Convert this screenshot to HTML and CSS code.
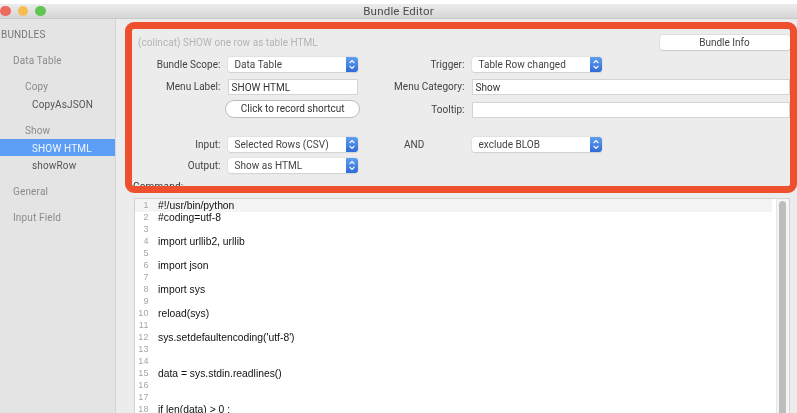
FILE: index.html
```html
<!DOCTYPE html>
<html lang="en">
<head>
<meta charset="utf-8">
<title>Bundle Editor</title>
<link rel="stylesheet" href="styles.css">
</head>
<body>
<div class="window">
  <header class="titlebar">
    <div class="lights"><span class="light red"></span><span class="light yellow"></span><span class="light green"></span></div>
    <div class="title">Bundle Editor</div>
  </header>
  <div class="content">
    <nav class="sidebar">
      <div class="side-head">BUNDLES</div>
      <div class="side-cat">Data Table</div>
      <div class="side-sub">Copy</div>
      <div class="side-item">CopyAsJSON</div>
      <div class="side-sub">Show</div>
      <div class="side-item selected">SHOW HTML</div>
      <div class="side-item">showRow</div>
      <div class="side-cat">General</div>
      <div class="side-cat">Input Field</div>
    </nav>
    <main class="main">
      <form class="form">
        <div class="hint">(colincat) SHOW one row as table HTML</div>
        <button type="button" class="info-btn">Bundle Info</button>

        <label class="lbl">Bundle Scope:</label>
        <div class="select"><span>Data Table</span><i class="stepper"><svg viewBox="0 0 12 15"><path d="M3.6 6 6 3.6 8.4 6M3.6 9 6 11.4 8.4 9"/></svg></i></div>
        <label class="lbl">Trigger:</label>
        <div class="select"><span>Table Row changed</span><i class="stepper"><svg viewBox="0 0 12 15"><path d="M3.6 6 6 3.6 8.4 6M3.6 9 6 11.4 8.4 9"/></svg></i></div>

        <label class="lbl">Menu Label:</label>
        <div class="input">SHOW HTML</div>
        <label class="lbl">Menu Category:</label>
        <div class="input">Show</div>

        <button type="button" class="shortcut">Click to record shortcut</button>
        <label class="lbl tip-lbl">Tooltip:</label>
        <div class="input tip"></div>

        <label class="lbl">Input:</label>
        <div class="select"><span>Selected Rows (CSV)</span><i class="stepper"><svg viewBox="0 0 12 15"><path d="M3.6 6 6 3.6 8.4 6M3.6 9 6 11.4 8.4 9"/></svg></i></div>
        <label class="lbl and">AND</label>
        <div class="select"><span>exclude BLOB</span><i class="stepper"><svg viewBox="0 0 12 15"><path d="M3.6 6 6 3.6 8.4 6M3.6 9 6 11.4 8.4 9"/></svg></i></div>

        <label class="lbl">Output:</label>
        <div class="select"><span>Show as HTML</span><i class="stepper"><svg viewBox="0 0 12 15"><path d="M3.6 6 6 3.6 8.4 6M3.6 9 6 11.4 8.4 9"/></svg></i></div>
      </form>
      <div class="cmd-label">Command:</div>
      <div class="editor-row">
        <div class="editor">
          <div class="line current"><span class="num">1</span><span class="code">#!/usr/bin/python</span></div>
          <div class="line"><span class="num">2</span><span class="code">#coding=utf-8</span></div>
          <div class="line"><span class="num">3</span><span class="code"></span></div>
          <div class="line"><span class="num">4</span><span class="code">import urllib2, urllib</span></div>
          <div class="line"><span class="num">5</span><span class="code"></span></div>
          <div class="line"><span class="num">6</span><span class="code">import json</span></div>
          <div class="line"><span class="num">7</span><span class="code"></span></div>
          <div class="line"><span class="num">8</span><span class="code">import sys</span></div>
          <div class="line"><span class="num">9</span><span class="code"></span></div>
          <div class="line"><span class="num">10</span><span class="code">reload(sys)</span></div>
          <div class="line"><span class="num">11</span><span class="code"></span></div>
          <div class="line"><span class="num">12</span><span class="code">sys.setdefaultencoding('utf-8')</span></div>
          <div class="line"><span class="num">13</span><span class="code"></span></div>
          <div class="line"><span class="num">14</span><span class="code"></span></div>
          <div class="line"><span class="num">15</span><span class="code">data = sys.stdin.readlines()</span></div>
          <div class="line"><span class="num">16</span><span class="code"></span></div>
          <div class="line"><span class="num">17</span><span class="code"></span></div>
          <div class="line"><span class="num">18</span><span class="code">if len(data) &gt; 0 :</span></div>
        </div>
        <div class="scrolltrack"><div class="thumb"></div></div>
      </div>
    </main>
  </div>
  <div class="annotation"></div>
</div>
</body>
</html>
```
FILE: styles.css
```css
* { box-sizing: border-box; }
html, body { margin: 0; height: 100%; }
body { background: #fff; overflow: hidden; font-family: "Roboto", "Liberation Sans", sans-serif; }
.window { position: relative; width: 797px; height: 413px; padding-top: 4px; display: flex; flex-direction: column; overflow: hidden; filter: blur(0.35px); }

.titlebar { position: relative; flex: 0 0 15px; background: linear-gradient(#ececec, #d6d6d6); border-bottom: 1px solid #c8c8c8; display: flex; align-items: center; }
.lights { display: flex; gap: 7px; }
.light { width: 10.5px; height: 10.5px; border-radius: 50%; }
.red { background: #ec6a5e; }
.yellow { background: #f4bf4f; }
.green { background: #61c554; }
.title { position: absolute; left: 0; right: 0; text-align: center; font-size: 11.5px; color: #4c4c4c; letter-spacing: .2px; }

.content { flex: 1; display: flex; min-height: 0; }

.sidebar { flex: 0 0 116px; background: #e4e4e4; border-right: 1px solid #d6d6d6; padding-top: 7px; font-size: 10px; color: #8b8b8b; letter-spacing: .15px; }
.side-head { height: 18px; line-height: 18px; padding-left: 1px; color: #777; }
.side-cat { height: 18px; line-height: 18px; margin-top: 8px; padding-left: 13px; }
.side-sub { height: 18px; line-height: 18px; margin-top: 8px; padding-left: 25px; }
.side-item { height: 18px; line-height: 18px; padding-left: 32px; color: #555; }
.side-item.selected { height: 17px; margin: -1px 0 1px; line-height: 19px; background: #5c9ef5; color: #f2f7ff; }

.main { flex: 1; min-width: 0; background: #ececec; padding-left: 18px; display: flex; flex-direction: column; }
.form { display: grid; grid-template-columns: 86.5px 130.5px 99.5px 318px; column-gap: 7px; grid-template-rows: 22px 22px 21px 37px 21px 23px; padding-top: 16px; font-size: 10px; letter-spacing: .03px; color: #444; }

.hint { grid-column: 1 / 4; padding-left: 4px; color: #b4b4b4; line-height: 15px; }
.info-btn { grid-column: 4; justify-self: end; width: 130px; height: 15px; padding: 0; border: 0; border-radius: 3px; background: #fff; box-shadow: 0 0 0 .5px #d0d0d0, 0 1px 1px #ccc; font: inherit; color: #444; }

.lbl { height: 15px; line-height: 16px; text-align: right; align-self: start; white-space: nowrap; }
.select { width: 130.5px; height: 15px; border-radius: 3px; background: #fff; box-shadow: 0 0 0 .5px #d8d8d8, 0 1px 1px #cfcfcf; display: flex; justify-content: space-between; line-height: 16px; padding-left: 7px; overflow: hidden; }
.stepper { flex: 0 0 12px; display: block; height: 15px; background: linear-gradient(#5f9ff0, #2f6bd6); }
.stepper svg { display: block; width: 12px; height: 15px; fill: none; stroke: #fff; stroke-width: 1.1; }
.input { height: 16px; background: #fff; border: 1px solid #d4d4d4; line-height: 15px; padding-left: 3px; color: #333; }
.shortcut { grid-column: 2; justify-self: center; width: 135px; height: 18px; padding: 0 0 2px; border: 1px solid #bcbcbc; border-radius: 9px; background: #fff; font: inherit; color: #333; }
.tip-lbl { grid-column: 3; margin-top: 2px; }
.input.tip { margin-top: 2px; }
.and { text-align: left; padding-left: 39px; }

.cmd-label { font-size: 10px; letter-spacing: .2px; color: #333; line-height: 12px; margin-left: -1px; height: 17px; }

.editor-row { flex: 1; min-height: 0; display: flex; margin-right: 7px; overflow: hidden; border: 1px solid #d2d2d2; border-bottom: 0; }
.editor { flex: 1; background: #fff; padding-right: 4px; font-family: "Liberation Sans", sans-serif; font-size: 10.33px; min-width: 0; }
.line { display: flex; height: 12px; line-height: 11px; }
.line.current { background: #f4f4f4; height: 13px; line-height: 13px; }
.num { flex: 0 0 14px; margin-right: 9px; text-align: right; color: #a6a6a6; font-size: 9px; letter-spacing: .4px; }
.code { color: #111; white-space: pre; }
.scrolltrack { flex: 0 0 13px; background: #f5f5f5; border-left: 1px solid #e6e6e6; padding: 2px 3px 0 2px; overflow: hidden; }
.thumb { height: 240px; border-radius: 4px; background: #bdbdbd; }

.annotation { position: absolute; left: 125px; top: 22px; width: 672px; height: 171px; border: 7px solid #ee502e; border-radius: 9px; pointer-events: none; }
```
